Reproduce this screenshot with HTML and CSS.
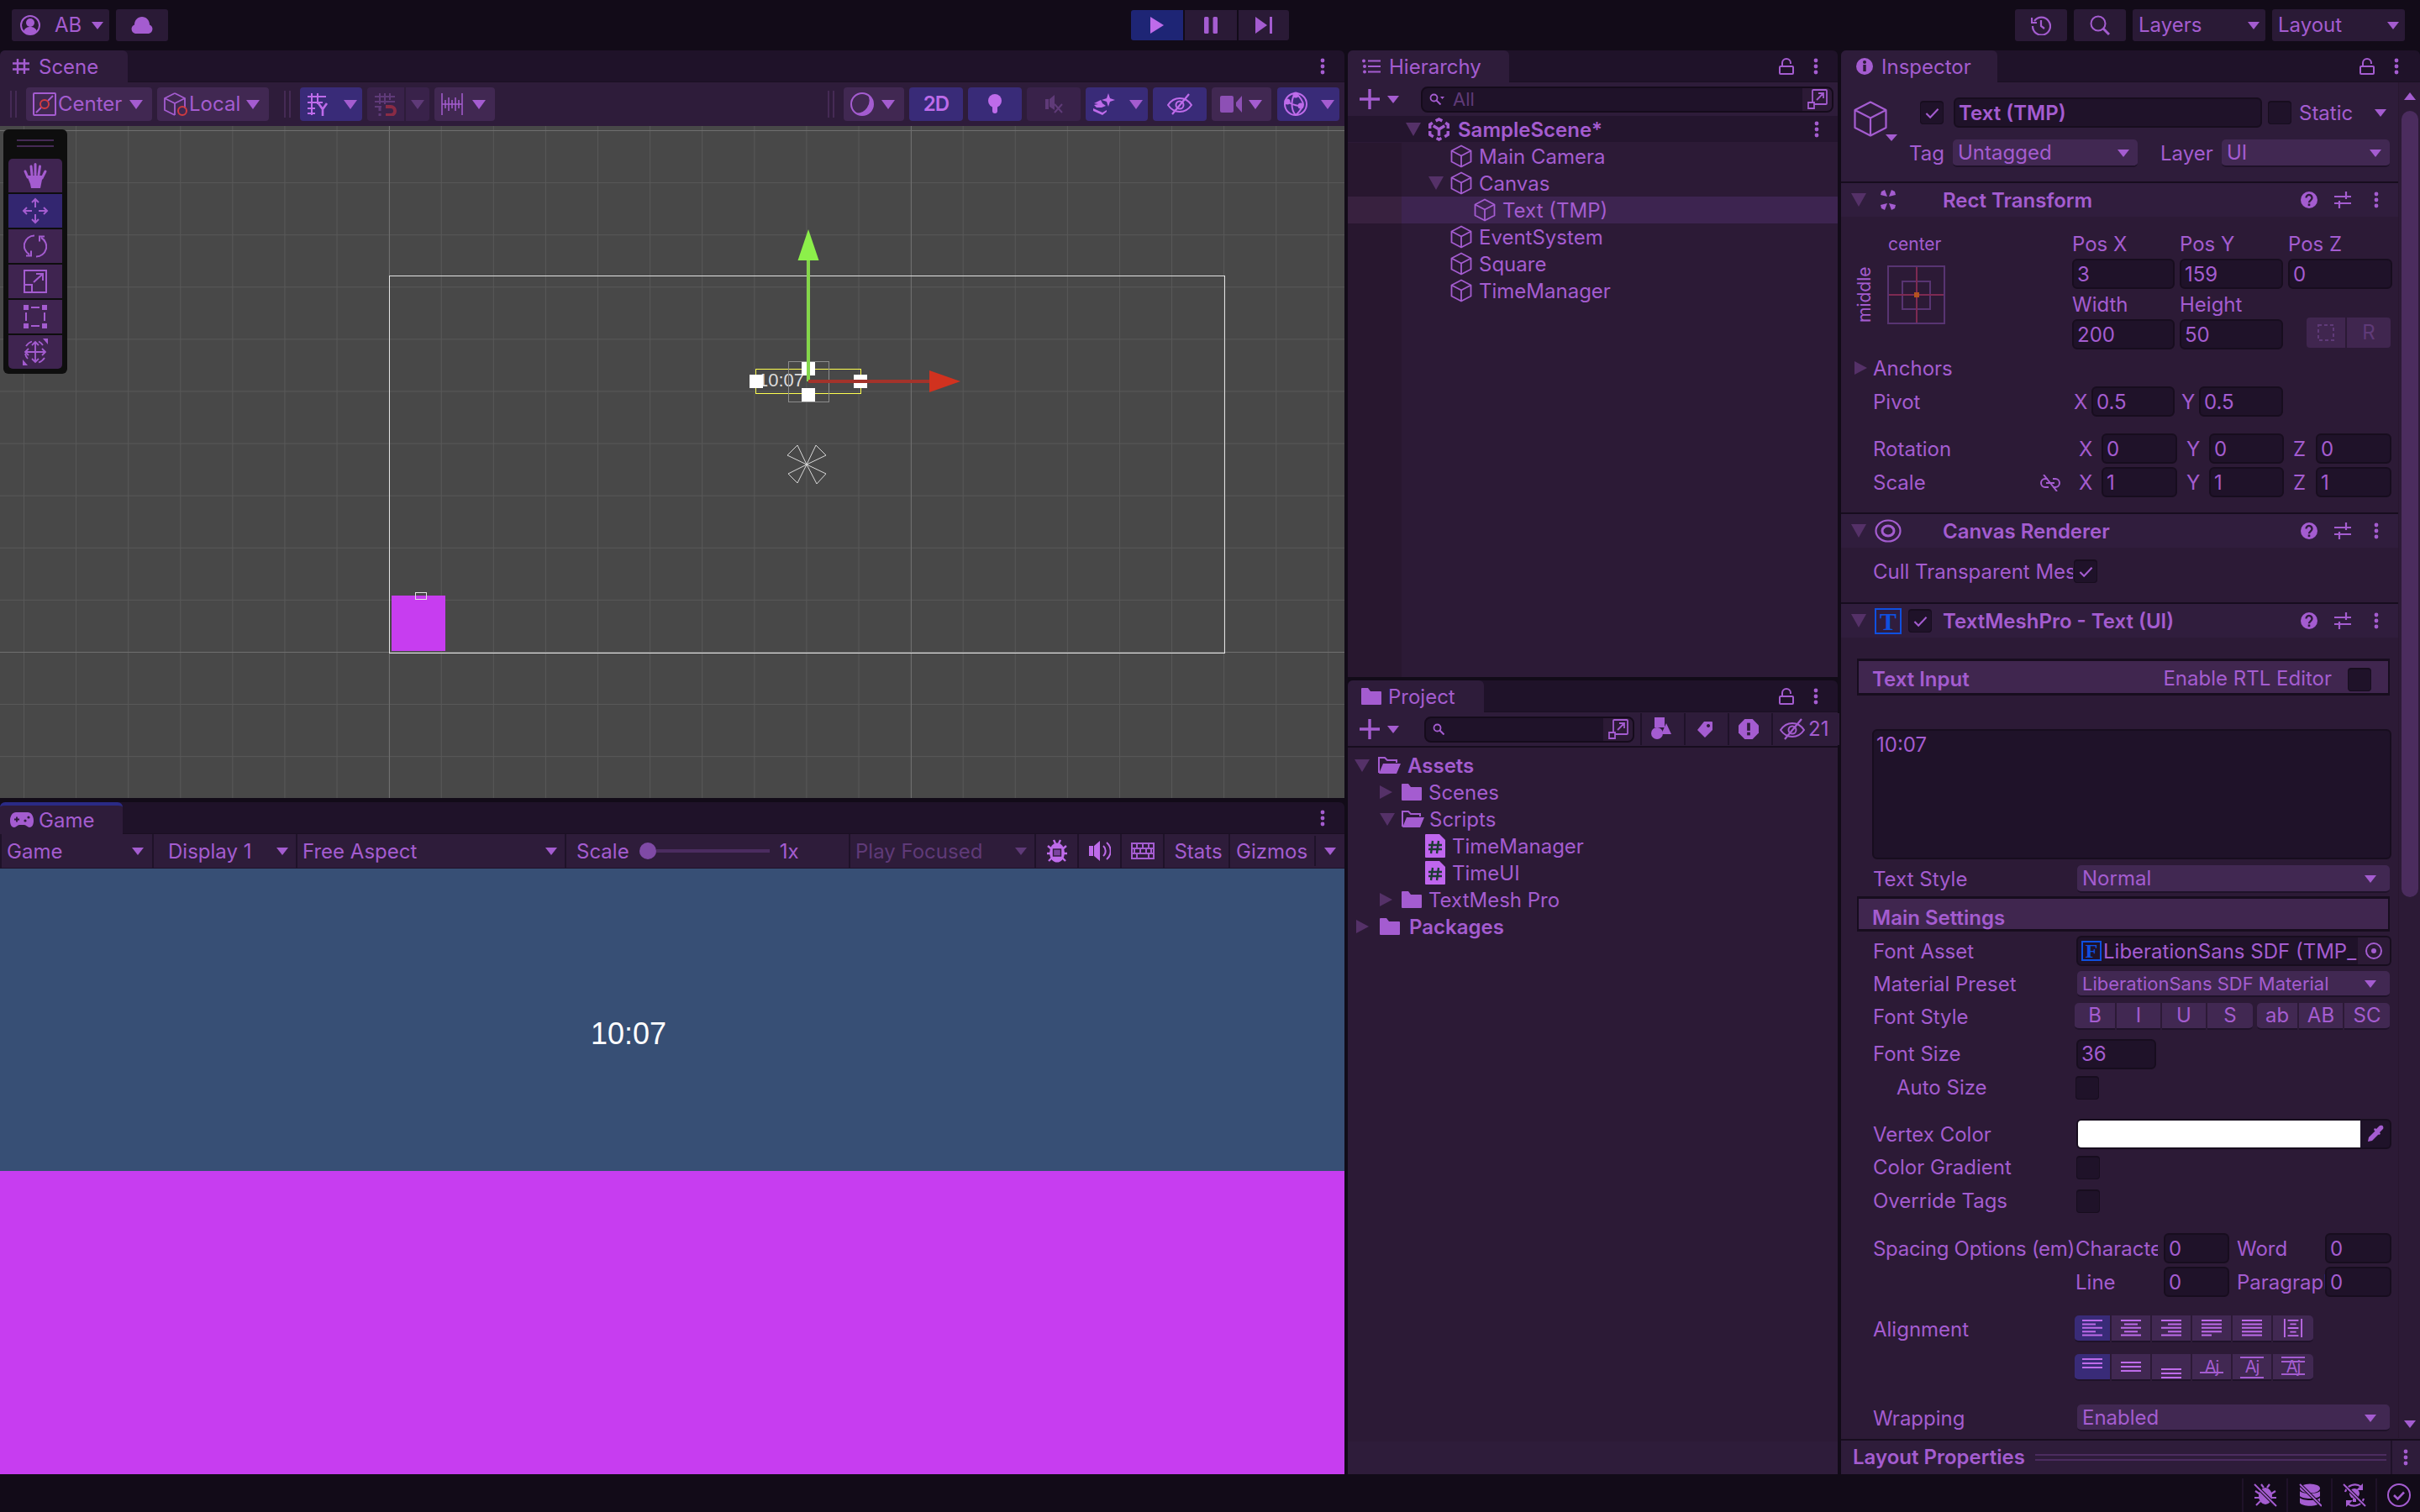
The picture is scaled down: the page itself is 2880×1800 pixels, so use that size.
FILE: index.html
```html
<!DOCTYPE html>
<html lang="en">
<head>
<meta charset="utf-8">
<title>Unity Editor</title>
<link rel="stylesheet" href="styles.css">
</head>
<body>
<svg class="defs" aria-hidden="true">
  <symbol id="user" viewBox="0 0 24 24"><circle cx="12" cy="12" r="11" fill="none" stroke="currentColor" stroke-width="2"/><circle cx="12" cy="9" r="5" fill="currentColor"/><path d="M4 20c1-5 5-6 8-6s7 1 8 6c-4 4-12 4-16 0z" fill="currentColor"/></symbol>
  <symbol id="cloud" viewBox="0 0 28 20"><path d="M6 20a5.500 5.500 0 0 1-1-10.500C5 4 9 0 14 0s9 4 9 9.500a5.500 5.500 0 0 1-1 10.500z" fill="currentColor"/></symbol>
  <symbol id="hash" viewBox="0 0 22 20"><path d="M7 1v18M15 1v18M1 6.500h20M1 13.500h20" fill="none" stroke="currentColor" stroke-width="2.400"/></symbol>
  <symbol id="dots" viewBox="0 0 6 20"><circle cx="3" cy="3" r="2.400" fill="currentColor"/><circle cx="3" cy="10" r="2.400" fill="currentColor"/><circle cx="3" cy="17" r="2.400" fill="currentColor"/></symbol>
  <symbol id="lock" viewBox="0 0 18 20"><rect x="1" y="10" width="16" height="9" rx="1" fill="none" stroke="currentColor" stroke-width="2"/><path d="M4 10V6a5 5 0 0 1 10 0v1" fill="none" stroke="currentColor" stroke-width="2"/></symbol>
  <symbol id="center" viewBox="0 0 28 28"><g fill="none" stroke="currentColor" stroke-width="2"><rect x="1" y="1" width="26" height="26" rx="1"/><path d="M4 24l6-6M18 10l6-6"/></g><circle cx="14" cy="14" r="5" fill="none" stroke="#d03a40" stroke-width="2"/></symbol>
  <symbol id="local" viewBox="0 0 28 28"><path d="M13 1L25 7v12M13 27L1 21V7L13 1M1 7l12 6 12-6M13 13v14" fill="none" stroke="currentColor" stroke-width="1.800"/><circle cx="22" cy="22" r="5" fill="none" stroke="#d03a40" stroke-width="2"/></symbol>
  <symbol id="snap" viewBox="0 0 28 28"><path d="M6 1v26M13 1v13M1 5h22M1 12h18M1 19h9M1 25h9" fill="none" stroke="currentColor" stroke-width="2"/><path d="M14 13l5 7 5-7M19 20v8" fill="none" stroke="currentColor" stroke-width="2.600"/></symbol>
  <symbol id="magnet" viewBox="0 0 28 28"><path d="M7 1v13M13 1v13M19 1v8M1 5h24M1 11h24M1 17h8" fill="none" stroke="currentColor" stroke-width="2"/><path d="M7 18v4M7 25v3" stroke="currentColor" stroke-width="3"/><path d="M14 17h6a5 5 0 0 1 0 10h-6" fill="none" stroke="#8a2b45" stroke-width="4"/></symbol>
  <symbol id="incr" viewBox="0 0 26 26"><path d="M1 0v26M25 0v26M5 8v10M9 5v16M13 8v10M17 5v16M21 8v10M1 13h24" fill="none" stroke="currentColor" stroke-width="1.500"/></symbol>
  <symbol id="hand" viewBox="0 0 30 30"><g stroke="currentColor" stroke-width="3" stroke-linecap="round"><path d="M6 17L3 10M11 14L10 4M15 14V1.500M19 14l1.500-10M23 18l4-8"/></g><path d="M5 15h19l-2 10-1 5H10l-1-5z" fill="currentColor"/></symbol>
  <symbol id="move" viewBox="0 0 32 32"><path d="M16 2v10M16 20v10M2 16h10M20 16h10M12 6l4-4 4 4M12 26l4 4 4-4M6 12l-4 4 4 4M26 12l4 4-4 4" fill="none" stroke="currentColor" stroke-width="2"/></symbol>
  <symbol id="rotate" viewBox="0 0 28 28"><path d="M13 1.500A12 12 0 0 0 7 24M3 25.500h6v-6M15 26.500A12 12 0 0 0 21 4M25 2.500h-6v6" fill="none" stroke="currentColor" stroke-width="2"/></symbol>
  <symbol id="scale" viewBox="0 0 28 28"><path d="M1 1h26v26H1zM1 18h9v9M12 15L23 5M15 5h8v8" fill="none" stroke="currentColor" stroke-width="2"/></symbol>
  <symbol id="rect" viewBox="0 0 28 28"><path d="M0 0h6v6H0zM22 0h6v6h-6zM0 22h6v6H0zM22 22h6v6h-6z" fill="currentColor"/><path d="M9 3h10M9 25h10M3 9v10M25 9v10" fill="none" stroke="currentColor" stroke-width="2"/></symbol>
  <symbol id="xform" viewBox="0 0 32 32"><path d="M16 4v24M4 16h24M12 8l4-4 4 4M12 24l4 4 4-4M8 12l-4 4 4 4M24 12l4 4-4 4" fill="none" stroke="currentColor" stroke-width="1.800"/><path d="M5 9A13 13 0 0 1 12 3.500M27 23a13 13 0 0 1-7 5.500M20 3.500A13 13 0 0 1 25 8M7 24a13 13 0 0 1-3-6" fill="none" stroke="currentColor" stroke-width="1.800"/><path d="M31 0v7l-6-7zM1 32v-7l6 7z" fill="currentColor"/></symbol>
  <symbol id="orb" viewBox="0 0 28 28"><circle cx="14" cy="14" r="13" fill="none" stroke="currentColor" stroke-width="2"/><path d="M21 3A13 13 0 0 1 6 24.500 15 15 0 0 0 21 3z" fill="currentColor"/></symbol>
  <symbol id="bulb" viewBox="0 0 18 24"><circle cx="9" cy="8" r="8" fill="currentColor"/><path d="M6 15h6v5a3 3 0 0 1-6 0z" fill="currentColor"/></symbol>
  <symbol id="mute" viewBox="0 0 24 22"><path d="M2 5h4v12H2zM7 5l6-5v18l-6-4z" fill="currentColor"/><path d="M13 11l9 10M22 11l-9 10" stroke="currentColor" stroke-width="2"/></symbol>
  <symbol id="fx" viewBox="0 0 26 26"><path d="M18 0l2 6 6 2-6 2-2 6-2-6-6-2 6-2z" fill="currentColor"/><path d="M1 12l8-4 2 4 4 3-5 2-6 0-3-3 5-1zM0 18l11 5 5-3v2l-5 4-11-5z" fill="currentColor"/></symbol>
  <symbol id="eyeoff" viewBox="0 0 30 26"><path d="M1 14c4-6 9-8 14-8s10 2 14 8c-4 6-9 8-14 8s-10-2-14-8z" fill="none" stroke="currentColor" stroke-width="2"/><circle cx="15" cy="14" r="4.500" fill="none" stroke="currentColor" stroke-width="2"/><path d="M26 1L6 25" stroke="currentColor" stroke-width="2.200"/></symbol>
  <symbol id="cam" viewBox="0 0 26 20"><path d="M0 2a2 2 0 0 1 2-2h12a2 2 0 0 1 2 2v16a2 2 0 0 1-2 2H2a2 2 0 0 1-2-2zM19 8l7-8v20l-7-8z" fill="currentColor"/></symbol>
  <symbol id="gizmo" viewBox="0 0 30 30"><g fill="none" stroke="currentColor" stroke-width="2"><circle cx="15" cy="15" r="13"/><path d="M15 2C9 8 9 22 15 28M15 2c5 4 9 10 9 14M5 12c6 4 14 6 19 4M24 16c-2 4-5 9-9 12"/></g><circle cx="15" cy="4" r="3.500" fill="currentColor"/><circle cx="5" cy="12" r="3.500" fill="currentColor"/><circle cx="21" cy="17" r="3.500" fill="currentColor"/></symbol>
  <symbol id="list" viewBox="0 0 22 18"><path d="M7 2.500h15M7 9h15M7 15.500h15" stroke="currentColor" stroke-width="2"/><circle cx="2" cy="2.500" r="2" fill="currentColor"/><circle cx="3" cy="9" r="2" fill="currentColor"/><circle cx="3" cy="15.500" r="2" fill="currentColor"/></symbol>
  <symbol id="plus" viewBox="0 0 24 24"><path d="M12 0v24M0 12h24" stroke="currentColor" stroke-width="3.400"/></symbol>
  <symbol id="keys" viewBox="0 0 18 14"><circle cx="5.500" cy="5.500" r="4" fill="none" stroke="currentColor" stroke-width="1.800"/><path d="M8.500 8.500l5 5" stroke="currentColor" stroke-width="2"/><path d="M13 4h5l-2.500 3z" fill="currentColor"/></symbol>
  <symbol id="mag" viewBox="0 0 14 14"><circle cx="5.500" cy="5.500" r="4" fill="none" stroke="currentColor" stroke-width="1.800"/><path d="M8.500 8.500l5 5" stroke="currentColor" stroke-width="2"/></symbol>
  <symbol id="maxi" viewBox="0 0 24 24"><path d="M6 16V2a1 1 0 0 1 1-1h15a1 1 0 0 1 1 1v15a1 1 0 0 1-1 1H8M1 16h7v7H1zM11 13l8-8M13 5h6v6" fill="none" stroke="currentColor" stroke-width="1.800"/></symbol>
  <symbol id="unity" viewBox="0 0 26 28"><g fill="none" stroke="currentColor" stroke-width="3.600"><path d="M9 3.500L13 1.500 17 3.500M21 6L24.200 8V13M24.200 16V20.500L20 23M16 25L13 26.500 10 25M6 23L1.800 20.500V16M1.800 13V8L5 6"/><path d="M6 9.500L13 14 20 9.500M13 14V22"/></g></symbol>
  <symbol id="cube" viewBox="0 0 26 28"><path d="M13 1.500L24.500 7.500V20.500L13 26.500L1.500 20.500V7.500ZM1.500 7.500L13 13.500L24.500 7.500M13 13.500V26.500" fill="none" stroke="currentColor" stroke-width="1.800" stroke-linejoin="round"/></symbol>
  <symbol id="cubebig" viewBox="0 0 52 48"><path d="M20 1.500L38.500 11V32L20 41.500L1.500 32V11ZM1.500 11L20 20.500L38.500 11M20 20.500V41.500" fill="none" stroke="currentColor" stroke-width="2.200" stroke-linejoin="round"/><path d="M38 40h14l-7 8z" fill="currentColor"/></symbol>
  <symbol id="info" viewBox="0 0 20 20"><circle cx="10" cy="10" r="10" fill="currentColor"/><rect x="8.300" y="8" width="3.400" height="8" fill="#2e1c3a"/><circle cx="10" cy="5" r="2" fill="#2e1c3a"/></symbol>
  <symbol id="check" viewBox="0 0 18 14"><path d="M1.500 7l5 5L16.500 1.500" fill="none" stroke="currentColor" stroke-width="2.200"/></symbol>
  <symbol id="rt" viewBox="0 0 26 24"><path d="M9 0l3 8-8-2 1-4zM17 0l-3 8 8-2-1-4zM9 24l3-8-8 2 1 4zM17 24l-3-8 8 2-1 4z" fill="currentColor"/></symbol>
  <symbol id="help" viewBox="0 0 20 20"><circle cx="10" cy="10" r="10" fill="currentColor"/><path d="M6.500 7.500a3.500 3.500 0 1 1 5.500 2.800c-1.300 1-2 1.500-2 3" fill="none" stroke="#2e1c3a" stroke-width="2.400"/><rect x="8.700" y="14.500" width="2.600" height="2.600" fill="#2e1c3a"/></symbol>
  <symbol id="tune" viewBox="0 0 20 20"><path d="M0 6h20M0 14h20M14 0v9M6 11v9" stroke="currentColor" stroke-width="2.200" fill="none"/></symbol>
  <symbol id="ring" viewBox="0 0 32 28"><ellipse cx="16" cy="14" rx="14.500" ry="12.500" fill="none" stroke="currentColor" stroke-width="2.200"/><ellipse cx="16" cy="14" rx="7" ry="6" fill="none" stroke="currentColor" stroke-width="3"/></symbol>
  <symbol id="dash" viewBox="0 0 20 20"><rect x="1" y="1" width="18" height="18" fill="none" stroke="currentColor" stroke-width="2" stroke-dasharray="4 3"/></symbol>
  <symbol id="link" viewBox="0 0 24 20"><path d="M9 5H6a5 5 0 0 0 0 10h4M15 5h3a5 5 0 0 1 0 10h-3M7 10h10" fill="none" stroke="currentColor" stroke-width="2"/><path d="M4 0l16 20" stroke="currentColor" stroke-width="2"/></symbol>
  <symbol id="target" viewBox="0 0 20 20"><circle cx="10" cy="10" r="9" fill="none" stroke="currentColor" stroke-width="2"/><circle cx="10" cy="10" r="3" fill="currentColor"/></symbol>
  <symbol id="dropper" viewBox="0 0 22 22"><path d="M2 20l1-5 8-8 4 4-8 8z" fill="currentColor"/><path d="M12 5l3-3c1-1 4-2 5 0s0 3-1 4l-3 3 1 2-2 1-6-6 1-2z" fill="currentColor"/></symbol>
  <symbol id="folder" viewBox="0 0 24 20"><path d="M0 1a1 1 0 0 1 1-1h7l3 4h12a1 1 0 0 1 1 1v14a1 1 0 0 1-1 1H1a1 1 0 0 1-1-1z" fill="currentColor"/></symbol>
  <symbol id="folderopen" viewBox="0 0 27 20"><path d="M1 19V1h7l3 3h11v3" fill="none" stroke="currentColor" stroke-width="2"/><path d="M1 20l5-12h21l-5 12z" fill="currentColor"/></symbol>
  <symbol id="script" viewBox="0 0 24 28"><path d="M0 1a1 1 0 0 1 1-1h16l7 7v20a1 1 0 0 1-1 1H1a1 1 0 0 1-1-1z" fill="#c066ee"/><path d="M9 8L7 23M16 8l-2 15M4 13h16M4 18h16" stroke="#1d3a34" stroke-width="2.400" fill="none"/></symbol>
  <symbol id="shapes" viewBox="0 0 24 28"><path d="M4 0h12v12H4z" fill="currentColor"/><circle cx="7" cy="19" r="7" fill="currentColor"/><path d="M18 7l6 13H12z" fill="currentColor"/></symbol>
  <symbol id="tag" viewBox="0 0 20 20"><path d="M9 1h9a1 1 0 0 1 1 1v9l-9 9-9-9zM14 4a2 2 0 1 0 .1 0z" fill="currentColor" fill-rule="evenodd"/></symbol>
  <symbol id="warn" viewBox="0 0 26 26"><path d="M8 0h10l8 8v10l-8 8H8l-8-8V8z" fill="currentColor"/><rect x="11" y="5" width="4" height="10" fill="#2e1c3a"/><rect x="11" y="17" width="4" height="4" fill="#2e1c3a"/></symbol>
  <symbol id="pad" viewBox="0 0 28 20"><path d="M7 1h14c4 0 7 4 7 10 0 5-2 8-5 8-2 0-4-3-6-3h-6c-2 0-4 3-6 3-3 0-5-3-5-8C0 5 3 1 7 1z" fill="currentColor"/><path d="M5 9.500h6M8 6.500v6" stroke="#2e1c3a" stroke-width="1.800"/><circle cx="18" cy="11" r="1.600" fill="#2e1c3a"/><circle cx="22" cy="7" r="1.600" fill="#2e1c3a"/></symbol>
  <symbol id="bug" viewBox="0 0 28 28"><ellipse cx="14" cy="16" rx="9" ry="11.500" fill="currentColor"/><path d="M10 1l2 4M18 1l-2 4M3 8l6 5M25 8l-6 5M2 17h6M26 17h-6M4 26l5-5M24 26l-5-5" stroke="currentColor" stroke-width="2.400" fill="none"/><rect x="9.500" y="12" width="9" height="8" fill="#7b43a0" stroke="#2e1c3a" stroke-width="1.400"/></symbol>
  <symbol id="speak" viewBox="0 0 26 24"><path d="M0 6h5v12H0zM6 6l7-6v24l-7-6z" fill="currentColor"/><path d="M17 6a8 8 0 0 1 0 12M21 2a13 13 0 0 1 0 20" fill="none" stroke="currentColor" stroke-width="2"/></symbol>
  <symbol id="kbd" viewBox="0 0 28 20"><path d="M1 1h26v18H1zM1 7h26M1 13h26M7 1v6M14 1v6M21 1v6M4 7v6M11 7v6M18 7v6M24 7v6M7 13v6M21 13v6" fill="none" stroke="currentColor" stroke-width="2"/></symbol>
  <symbol id="history" viewBox="0 0 24 24"><path d="M4 7a10.500 10.500 0 1 1-2 6M1 3v6h6M12 6v7l4 3" fill="none" stroke="currentColor" stroke-width="2.200"/></symbol>
  <symbol id="search" viewBox="0 0 24 24"><circle cx="10" cy="10" r="8.500" fill="none" stroke="currentColor" stroke-width="2"/><path d="M16 16l7 7" stroke="currentColor" stroke-width="3"/></symbol>
  <symbol id="play" viewBox="0 0 16 20"><path d="M0 0l16 10L0 20z" fill="currentColor"/></symbol>
  <symbol id="pause" viewBox="0 0 16 20"><rect width="5.500" height="20" rx="1.500" fill="currentColor"/><rect x="10.500" width="5.500" height="20" rx="1.500" fill="currentColor"/></symbol>
  <symbol id="step" viewBox="0 0 20 20"><path d="M0 0l14 10L0 20z" fill="currentColor"/><rect x="17" width="3" height="20" fill="currentColor"/></symbol>
  <symbol id="bugoff" viewBox="0 0 28 28"><ellipse cx="14" cy="15" rx="8" ry="10" fill="currentColor"/><path d="M9 1l3 4M19 1l-3 4M2 9l6 4M26 9l-6 4M1 17h7M27 17h-7M3 26l5-5M25 26l-5-5" stroke="currentColor" stroke-width="2.200" fill="none"/><path d="M1 1l26 26" stroke="#120b18" stroke-width="4"/><path d="M1 1l26 26" stroke="currentColor" stroke-width="2"/></symbol>
  <symbol id="dboff" viewBox="0 0 26 28"><ellipse cx="13" cy="6" rx="12" ry="5.500" fill="currentColor"/><path d="M1 9c3 4 21 4 24 0v6c-3 4-21 4-24 0zM1 17c3 4 21 4 24 0v6c-3 5-21 5-24 0z" fill="currentColor"/><path d="M1 1l26 26" stroke="#120b18" stroke-width="4"/><path d="M1 1l26 26" stroke="currentColor" stroke-width="2"/></symbol>
  <symbol id="lightoff" viewBox="0 0 28 28"><path d="M3 10A12 12 0 0 1 22 4M25 18A12 12 0 0 1 6 24" fill="none" stroke="currentColor" stroke-width="2.200"/><path d="M24 0v8h-8zM4 28v-8h8z" fill="currentColor"/><circle cx="14" cy="12" r="6" fill="currentColor"/><path d="M12 18h4v4h-4z" fill="currentColor"/><path d="M1 1l26 26" stroke="#120b18" stroke-width="4"/><path d="M1 1l26 26" stroke="currentColor" stroke-width="2"/></symbol>
  <symbol id="okring" viewBox="0 0 28 28"><circle cx="14" cy="14" r="13" fill="none" stroke="currentColor" stroke-width="2"/><path d="M8 14l4.500 4.500L20 10.500" fill="none" stroke="currentColor" stroke-width="2.600"/></symbol>
  <symbol id="al-l" viewBox="0 0 24 22"><path d="M0 1h24M0 5.400h16M0 9.800h24M0 14.200h16M0 18.600h24" transform="translate(0 1)" stroke="currentColor" stroke-width="2"/></symbol>
  <symbol id="al-c" viewBox="0 0 24 22"><path d="M0 2h24M4 6.400h16M0 10.800h24M4 15.200h16M0 19.600h24" stroke="currentColor" stroke-width="2"/></symbol>
  <symbol id="al-r" viewBox="0 0 24 22"><path d="M0 2h24M8 6.400h16M0 10.800h24M8 15.200h16M0 19.600h24" stroke="currentColor" stroke-width="2"/></symbol>
  <symbol id="al-j" viewBox="0 0 24 22"><path d="M0 2h24M0 6.400h24M0 10.800h24M0 15.200h24M0 19.600h12" stroke="currentColor" stroke-width="2"/></symbol>
  <symbol id="al-f" viewBox="0 0 24 22"><path d="M0 2h24M0 6.400h24M0 10.800h24M0 15.200h24M0 19.600h24" stroke="currentColor" stroke-width="2"/></symbol>
  <symbol id="al-g" viewBox="0 0 24 24"><path d="M1 0v24M23 0v24M5 2h14M8 7h8M5 12h14M8 17h8M5 22h14" stroke="currentColor" stroke-width="2"/></symbol>
  <symbol id="va-t" viewBox="0 0 24 30"><path d="M0 7h24M0 12h24M0 17h24" transform="translate(0 -1)" stroke="currentColor" stroke-width="2"/></symbol>
  <symbol id="va-m" viewBox="0 0 24 30"><path d="M0 10h24M0 15h24M0 20h24" stroke="currentColor" stroke-width="2"/></symbol>
  <symbol id="va-b" viewBox="0 0 24 30"><path d="M0 18h24M0 23h24M0 28h24" stroke="currentColor" stroke-width="2"/></symbol>
</svg>

<div class="app">
  <header class="top">
    <div class="top-l">
      <div class="tbtn ab"><svg class="i s24"><use href="#user"/></svg><span class="ab-t">AB</span><i class="tri t14"></i></div>
      <div class="tbtn cloud"><svg class="i cl"><use href="#cloud"/></svg></div>
    </div>
    <div class="top-c">
      <div class="pbtn on"><svg class="i p"><use href="#play"/></svg></div>
      <div class="pbtn"><svg class="i p"><use href="#pause"/></svg></div>
      <div class="pbtn stepb"><svg class="i st"><use href="#step"/></svg></div>
    </div>
    <div class="top-r">
      <div class="tbtn hist"><svg class="i s24"><use href="#history"/></svg></div>
      <div class="tbtn hist"><svg class="i s24"><use href="#search"/></svg></div>
      <div class="tbtn drop"><span>Layers</span><i class="tri t14"></i></div>
      <div class="tbtn drop"><span>Layout</span><i class="tri t14"></i></div>
    </div>
  </header>

  <main class="main">
    <div class="col-left">
      <section class="scene">
        <div class="strip"><div class="tab w152"><svg class="i hashi"><use href="#hash"/></svg><span class="tabt-47">Scene</span></div><svg class="i dots dots-r"><use href="#dots"/></svg></div>
        <div class="scene-tb">
          <i class="grip"></i>
          <div class="b center"><svg class="i s28"><use href="#center"/></svg><span class="tight">Center</span><i class="tri t17 end"></i></div>
          <div class="b local"><svg class="i s28"><use href="#local"/></svg><span class="tight">Local</span><i class="tri t17 end"></i></div>
          <i class="grip g2"></i>
          <div class="b split on"><span class="sp1"><svg class="i s28 bright"><use href="#snap"/></svg></span><span class="sp2"><i class="tri t17"></i></span></div>
          <div class="b split dim"><span class="sp1"><svg class="i s28"><use href="#magnet"/></svg></span><span class="sp2"><i class="tri t17"></i></span></div>
          <div class="b inc"><svg class="i s26"><use href="#incr"/></svg><i class="tri t17 end"></i></div>
          <span class="spacer"></span>
          <i class="grip g3"></i>
          <div class="b orb"><svg class="i s28"><use href="#orb"/></svg><i class="tri t17 end"></i></div>
          <div class="b sq on bright"><span class="twod">2D</span></div>
          <div class="b sq on bright"><svg class="i bulb"><use href="#bulb"/></svg></div>
          <div class="b sq dim"><svg class="i mute"><use href="#mute"/></svg></div>
          <div class="b split on"><span class="sp1"><svg class="i fx bright"><use href="#fx"/></svg></span><span class="sp2"><i class="tri t17"></i></span></div>
          <div class="b sq on"><svg class="i eye bright"><use href="#eyeoff"/></svg></div>
          <div class="b camb"><svg class="i cam"><use href="#cam"/></svg><i class="tri t17 end"></i></div>
          <div class="b split on gizmob"><span class="sp1"><svg class="i s30 bright"><use href="#gizmo"/></svg></span><span class="sp2"><i class="tri t17"></i></span></div>
        </div>
        <div class="scene-view">
          <svg class="gizmos" width="1600" height="800" viewBox="0 150 1600 800">
            <rect x="463.500" y="328.500" width="994" height="449" fill="none" stroke="#e2e2e2" stroke-width="1"/>
            <rect x="466" y="709" width="64" height="66" fill="#c73df0"/>
            <rect x="494.500" y="705.500" width="13" height="8" fill="none" stroke="#e2e2e2" stroke-width="1"/>
            <text x="902" y="460" class="gz-text">10:07</text>
            <rect x="899.500" y="439.500" width="125" height="29" fill="none" stroke="#ffff50" stroke-width="1"/>
            <rect x="938.500" y="430.500" width="48" height="48" fill="none" stroke="#8c8c8c" stroke-width="1"/>
            <path d="M954 431h16v16h-16zM892 446h16v16h-16zM1016 446h16v16h-16zM954 462h16v16h-16z" fill="#fff"/>
            <rect x="960" y="310" width="4" height="144" fill="#84d64a"/>
            <path d="M962 273l12.500 37h-25z" fill="#8cf04a"/>
            <rect x="962" y="452" width="145" height="4" fill="#a3332b"/>
            <path d="M1106 441l37 13-37 13z" fill="#d1321f"/>
            <g fill="none" stroke="#d8d8d8" stroke-width="1">
              <path d="M960 553L937 542 949 530zM960 553L971 530 983 542zM960 553L938 564 949 575zM960 553L983 564 972 576z"/>
            </g>
          </svg>
          <div class="toolbox">
            <i class="tb-grip"></i>
            <div class="tool"><svg class="i s30"><use href="#hand"/></svg></div>
            <div class="tool on"><svg class="i s32"><use href="#move"/></svg></div>
            <div class="tool"><svg class="i s28"><use href="#rotate"/></svg></div>
            <div class="tool"><svg class="i s28"><use href="#scale"/></svg></div>
            <div class="tool"><svg class="i s28"><use href="#rect"/></svg></div>
            <div class="tool"><svg class="i s32"><use href="#xform"/></svg></div>
          </div>
        </div>
      </section>
      <section class="game">
        <div class="strip gstrip"><div class="tab w146 gtab"><svg class="i padi"><use href="#pad"/></svg><span class="tabt-47b">Game</span></div><svg class="i dots dots-r"><use href="#dots"/></svg></div>
        <div class="game-tb">
          <div class="gs g1"><span>Game</span><i class="tri t14 end"></i></div>
          <div class="gs g2w"><span>Display 1</span><i class="tri t14 end"></i></div>
          <div class="gs g3w"><span>Free Aspect</span><i class="tri t14 end"></i></div>
          <div class="gs g4w"><span>Scale</span><i class="thumb"></i><i class="track"></i><span class="onex">1x</span></div>
          <div class="gs g5w dimt"><span>Play Focused</span><i class="tri t14 end"></i></div>
          <div class="gs ic"><svg class="i s28 bright"><use href="#bug"/></svg></div>
          <div class="gs ic"><svg class="i s26b bright"><use href="#speak"/></svg></div>
          <div class="gs ic"><svg class="i kbd"><use href="#kbd"/></svg></div>
          <div class="gs g6w"><span>Stats</span></div>
          <div class="gs g7w"><span>Gizmos</span><i class="vd"></i><i class="tri t14"></i></div>
        </div>
        <div class="game-blue"><span class="g-clock">10:07</span></div>
        <div class="game-pink"></div>
      </section>
    </div>

    <div class="col-mid">
      <section class="hier">
        <div class="strip"><div class="tab w192"><svg class="i listi"><use href="#list"/></svg><span class="tabt-h">Hierarchy</span></div><span class="strip-r"><svg class="i lock"><use href="#lock"/></svg><svg class="i dots"><use href="#dots"/></svg></span></div>
        <div class="pn-tb">
          <svg class="i plus"><use href="#plus"/></svg><i class="tri t14 tp"></i>
          <div class="sf sf-h"><svg class="i keys"><use href="#keys"/></svg><span class="ph">All</span><span class="sf-b"><svg class="i s24b"><use href="#maxi"/></svg></span></div>
        </div>
        <div class="tree">
          <div class="root"><i class="tri dn t-h"></i><svg class="i unity"><use href="#unity"/></svg><b class="rt">SampleScene*</b><svg class="i dots dots-root"><use href="#dots"/></svg></div>
          <div class="tr l1"><svg class="i cube"><use href="#cube"/></svg><span>Main Camera</span></div>
          <div class="tr l0"><i class="tri dn t-h"></i><svg class="i cube"><use href="#cube"/></svg><span>Canvas</span></div>
          <div class="tr l2 sel"><svg class="i cube"><use href="#cube"/></svg><span>Text (TMP)</span></div>
          <div class="tr l1"><svg class="i cube"><use href="#cube"/></svg><span>EventSystem</span></div>
          <div class="tr l1"><svg class="i cube"><use href="#cube"/></svg><span>Square</span></div>
          <div class="tr l1"><svg class="i cube"><use href="#cube"/></svg><span>TimeManager</span></div>
        </div>
      </section>
      <section class="proj">
        <div class="strip"><div class="tab w162"><svg class="i folder fd-tab"><use href="#folder"/></svg><span class="tabt-p">Project</span></div><span class="strip-r"><svg class="i lock"><use href="#lock"/></svg><svg class="i dots"><use href="#dots"/></svg></span></div>
        <div class="pn-tb ptb">
          <svg class="i plus"><use href="#plus"/></svg><i class="tri t14 tp"></i>
          <div class="sf sf-p"><svg class="i mag"><use href="#mag"/></svg><span class="sf-b"><svg class="i s24b"><use href="#maxi"/></svg></span></div>
          <div class="pf w50"><svg class="i shapes"><use href="#shapes"/></svg></div>
          <div class="pf w50"><svg class="i s20"><use href="#tag"/></svg></div>
          <div class="pf w50"><svg class="i s26b"><use href="#warn"/></svg></div>
          <div class="pf w79"><svg class="i eye"><use href="#eyeoff"/></svg><span>21</span></div>
        </div>
        <div class="ptree">
          <div class="pr a0"><i class="tri dn t-p"></i><svg class="i fo"><use href="#folderopen"/></svg><b>Assets</b></div>
          <div class="pr a1"><i class="tri rt-t"></i><svg class="i folder"><use href="#folder"/></svg><span>Scenes</span></div>
          <div class="pr a1"><i class="tri dn t-p"></i><svg class="i fo"><use href="#folderopen"/></svg><span>Scripts</span></div>
          <div class="pr a2"><svg class="i script"><use href="#script"/></svg><span>TimeManager</span></div>
          <div class="pr a2"><svg class="i script"><use href="#script"/></svg><span>TimeUI</span></div>
          <div class="pr a1"><i class="tri rt-t"></i><svg class="i folder"><use href="#folder"/></svg><span>TextMesh Pro</span></div>
          <div class="pr a0"><i class="tri rt-t"></i><svg class="i folder"><use href="#folder"/></svg><b>Packages</b></div>
        </div>
        <div class="pfoot"></div>
      </section>
    </div>

    <section class="insp">
      <div class="strip"><div class="tab w186"><svg class="i s20"><use href="#info"/></svg><span class="tabt-i">Inspector</span></div><span class="strip-r strip-ri"><svg class="i lock"><use href="#lock"/></svg><svg class="i dots"><use href="#dots"/></svg></span></div>
      <div class="ins-body">
        <div class="ins-content">
          <div class="ohead">
            <div class="oh1">
              <svg class="i cubebig"><use href="#cubebig"/></svg>
              <span class="cb on m27"><svg class="i ck"><use href="#check"/></svg></span>
              <div class="f name"><b>Text (TMP)</b></div>
              <span class="cb m7"></span>
              <span class="static">Static</span><i class="tri t14"></i>
            </div>
            <div class="oh2">
              <span class="w52">Tag</span><div class="dd w220"><span>Untagged</span><i class="tri t14"></i></div>
              <span class="w73">Layer</span><div class="dd w200"><span>UI</span><i class="tri t14"></i></div>
            </div>
          </div>

          <div class="ch"><i class="tri dn t-h"></i><span class="ch-ic"><svg class="i rt-i"><use href="#rt"/></svg></span><span class="ch-cb"></span><b>Rect Transform</b><span class="ch-r"><svg class="i s20"><use href="#help"/></svg><svg class="i s20"><use href="#tune"/></svg><svg class="i dots"><use href="#dots"/></svg></span></div>
          <div class="rt-top">
            <div class="anchor">
              <span class="a-c">center</span>
              <span class="a-m">middle</span>
              <div class="a-box"><i class="a-inner"></i><i class="a-h"></i><i class="a-v"></i><i class="a-o"></i></div>
            </div>
            <div class="rt-grid">
              <span>Pos X</span><span>Pos Y</span><span>Pos Z</span>
              <div class="f">3</div><div class="f">159</div><div class="f">0</div>
              <span>Width</span><span>Height</span><span></span>
              <div class="f">200</div><div class="f">50</div>
              <div class="rt-btns"><span class="rb rb1"><svg class="i s20"><use href="#dash"/></svg></span><span class="rb rb2">R</span></div>
            </div>
          </div>
          <div class="r anchors"><i class="tri rt-t"></i><span>Anchors</span></div>
          <div class="r pivot"><span class="l238">Pivot</span><span class="ax">X</span><div class="f w99">0.5</div><span class="ax ay">Y</span><div class="f w100">0.5</div></div>
          <div class="r rot"><span class="l244">Rotation</span><span class="ax2">X</span><div class="f w90">0</div><span class="ax2 g11">Y</span><div class="f w89">0</div><span class="ax2 g11">Z</span><div class="f w90">0</div></div>
          <div class="r scale"><span class="l244 lnk"><span>Scale</span><svg class="i link"><use href="#link"/></svg></span><span class="ax2">X</span><div class="f w90">1</div><span class="ax2 g11">Y</span><div class="f w89">1</div><span class="ax2 g11">Z</span><div class="f w90">1</div></div>

          <div class="ch ch-mt18"><i class="tri dn t-h"></i><span class="ch-ic"><svg class="i ring"><use href="#ring"/></svg></span><span class="ch-cb"></span><b>Canvas Renderer</b><span class="ch-r"><svg class="i s20"><use href="#help"/></svg><svg class="i s20"><use href="#tune"/></svg><svg class="i dots"><use href="#dots"/></svg></span></div>
          <div class="r cull"><span class="l241 clip">Cull Transparent Mes</span><span class="cb on"><svg class="i ck"><use href="#check"/></svg></span></div>

          <div class="ch ch-mt23"><i class="tri dn t-h"></i><span class="ch-ic"><span class="tbox">T</span></span><span class="ch-cb"><span class="cb on"><svg class="i ck"><use href="#check"/></svg></span></span><b>TextMeshPro - Text (UI)</b><span class="ch-r"><svg class="i s20"><use href="#help"/></svg><svg class="i s20"><use href="#tune"/></svg><svg class="i dots"><use href="#dots"/></svg></span></div>
          <div class="sec sec-ti"><b>Text Input</b><span class="rtl">Enable RTL Editor</span><span class="cb"></span></div>
          <div class="ta">10:07</div>
          <div class="r h33 mt7"><span class="l242">Text Style</span><div class="dd w372"><span>Normal</span><i class="tri t14"></i></div></div>
          <div class="sec sec-ms"><b>Main Settings</b></div>
          <div class="r h36 mt5"><span class="l241">Font Asset</span><div class="f fa"><span class="fbox">F</span><span class="fa-t">LiberationSans SDF (TMP_Font Asset)</span><span class="fa-b"><svg class="i s20"><use href="#target"/></svg></span></div></div>
          <div class="r h31 mt6"><span class="l242">Material Preset</span><div class="dd w372 sm"><span>LiberationSans SDF Material</span><i class="tri t14"></i></div></div>
          <div class="r h32 mt7"><span class="l239">Font Style</span>
            <div class="segs">
              <span class="sb w48">B</span><span class="sb w52">I</span><span class="sb w52">U</span><span class="sb w54">S</span>
            </div>
            <div class="segs m5">
              <span class="sb w48">ab</span><span class="sb w52">AB</span><span class="sb w54">SC</span>
            </div>
          </div>
          <div class="r h35 mt11"><span class="l241">Font Size</span><div class="f w95">36</div></div>
          <div class="r h27 mt9 ind"><span class="l212">Auto Size</span><span class="cb"></span></div>
          <div class="r h36 mt24"><span class="l241">Vertex Color</span><div class="color"><i class="white"></i><span class="drop-b"><svg class="i s22"><use href="#dropper"/></svg></span></div></div>
          <div class="r h27 mt8"><span class="l241">Color Gradient</span><span class="cb"></span></div>
          <div class="r h27 mt13"><span class="l241">Override Tags</span><span class="cb"></span></div>
          <div class="r h36 mt25"><span class="l240 tsp">Spacing Options (em)</span><span class="sl98 clip">Character</span><div class="f f78 m7">0</div><span class="sl105 clip m9">Word</span><div class="f f79">0</div></div>
          <div class="r h36 mt4"><span class="l240"></span><span class="sl98 clip">Line</span><div class="f f78 m7">0</div><span class="sl105 clip m9">Paragraph</span><div class="f f79">0</div></div>
          <div class="r h32 mt22"><span class="l239">Alignment</span>
            <div class="segs">
              <span class="sb w42 on"><svg class="i ali bright"><use href="#al-l"/></svg></span><span class="sb w46"><svg class="i ali bright"><use href="#al-c"/></svg></span><span class="sb w46"><svg class="i ali bright"><use href="#al-r"/></svg></span><span class="sb w46"><svg class="i ali bright"><use href="#al-j"/></svg></span><span class="sb w46"><svg class="i ali bright"><use href="#al-f"/></svg></span><span class="sb w48"><svg class="i ali bright"><use href="#al-g"/></svg></span>
            </div>
          </div>
          <div class="r h32 mt14"><span class="l239"></span>
            <div class="segs">
              <span class="sb w42 on"><svg class="i vai bright"><use href="#va-t"/></svg></span><span class="sb w46"><svg class="i vai bright"><use href="#va-m"/></svg></span><span class="sb w46"><svg class="i vai bright"><use href="#va-b"/></svg></span><span class="sb w46"><span class="aj aj1">Aj</span></span><span class="sb w46"><span class="aj aj2">Aj</span></span><span class="sb w48"><span class="aj aj3">Aj</span></span>
            </div>
          </div>
          <div class="r h32 mt28"><span class="l242">Wrapping</span><div class="dd w372"><span>Enabled</span><i class="tri t14"></i></div></div>
        </div>
        <div class="scrollbar"><i class="tri up"></i><i class="sb-thumb"></i><i class="tri t14 sb-dn"></i></div>
      </div>
      <div class="layout-band"><b>Layout Properties</b><i class="lb-lines"></i><span class="lb-d"><svg class="i dots"><use href="#dots"/></svg></span></div>
    </section>
  </main>

  <footer class="status">
    <span class="st-i"><svg class="i s28"><use href="#bugoff"/></svg></span>
    <span class="st-i"><svg class="i s28"><use href="#dboff"/></svg></span>
    <span class="st-i"><svg class="i s28"><use href="#lightoff"/></svg></span>
    <span class="st-i last"><svg class="i s28"><use href="#okring"/></svg></span>
  </footer>
</div>
</body>
</html>
```

FILE: styles.css
```css
:root{
  --txt:#a45cd0; --bright:#be6bea; --dimtxt:#5f3a78;
  --top:#120b18; --strip:#1f1229; --bar:#2e1c3a; --panel:#2c1a36; --btn:#412852;
  --on:#392b78; --field:#1f1229; --line:#170d1e;
}
*{box-sizing:border-box}
html,body{margin:0;padding:0;background:var(--top)}
body{font:24px/1.2 Inter,"Liberation Sans",sans-serif;color:var(--txt);width:2880px;height:1800px;overflow:hidden}
b{font-weight:600}
.defs{position:absolute;width:0;height:0;overflow:hidden}
.i{display:block;flex:none;color:inherit}
.bright{color:var(--bright)}
.s20{width:20px;height:20px}.s22{width:22px;height:22px}.s24{width:24px;height:24px}.s24b{width:24px;height:24px}
.s26{width:26px;height:26px}.s26b{width:26px;height:24px}.s28{width:28px;height:28px}.s30{width:30px;height:30px}.s32{width:32px;height:32px}
.tri{display:block;flex:none;width:0;height:0;border-left:8px solid transparent;border-right:8px solid transparent;border-top:11px solid currentColor}
.t14{border-left-width:7px;border-right-width:7px;border-top-width:9px}
.t17{border-left-width:8.5px;border-right-width:8.5px;border-top-width:11px}
.t-h{border-left-width:9px;border-right-width:9px;border-top:16px solid #553168}
.t-p{border-left-width:9px;border-right-width:9px;border-top:15px solid #553168}
.rt-t{border-top:8px solid transparent;border-bottom:8px solid transparent;border-left:15px solid #553168;border-right:0}
.up{border-top:0;border-bottom:9px solid currentColor;border-left-width:7px;border-right-width:7px}
.end{margin-left:auto}

.app{width:2880px;height:1800px;display:flex;flex-direction:column}
.top{height:60px;flex:none;display:grid;grid-template-columns:1fr auto 1fr;align-items:start;padding-top:11px}
.top-l{display:flex;gap:8px;padding-left:14px}
.top-c{display:flex;gap:2px;margin-top:1px}
.top-r{display:flex;gap:8px;justify-content:flex-end;padding-right:18px}
.tbtn{height:38px;background:#2a1a36;border-radius:3px;display:flex;align-items:center}
.ab{width:116px;padding:0 7px 0 10px}
.ab-t{margin-left:17px;margin-right:auto}
.cloud{width:62px;justify-content:center}
.cl{width:28px;height:20px}
.hist{width:62px;justify-content:center}
.drop{width:158px;padding:0 7px}
.drop span{margin-right:auto}
.pbtn{width:62px;height:36px;background:#2a1a36;display:flex;align-items:center;justify-content:center}
.pbtn.on{background:#1e2575;color:var(--bright);border-radius:3px 0 0 3px}
.stepb{width:60px;border-radius:0 3px 3px 0}
.p{width:16px;height:20px}.st{width:20px;height:20px}

.main{flex:1;min-height:0;display:flex;gap:4px}
.col-left{width:1600px;display:flex;flex-direction:column;gap:5px}
.col-mid{width:583px;display:flex;flex-direction:column;gap:4px}
.scene{height:890px;display:flex;flex-direction:column}
.game{flex:1;min-height:0;display:flex;flex-direction:column}
.strip{height:38px;flex:none;background:var(--strip);border-radius:6px 6px 0 0;display:flex;align-items:center;border-bottom:1px solid #1a0f22}
.tab{height:38px;background:var(--bar);border-radius:6px 6px 0 0;display:flex;align-items:center;flex:none}
.tab span{padding-top:3px}
.w152{width:152px;padding-left:14px}.w146{width:146px;padding-left:12px}.w192{width:192px;padding-left:17px}.w162{width:162px;padding-left:16px}.w186{width:186px;padding-left:18px}
.hashi{width:22px;height:20px}.padi{width:28px;height:20px}.listi{width:22px;height:18px}.fd-tab{width:24px;height:20px}
.tabt-47{margin-left:10px}.tabt-47b{margin-left:6px}.tabt-h{margin-left:10px}.tabt-p{margin-left:8px}.tabt-i{margin-left:10px}
.dots{width:6px;height:20px}
.dots-r{margin-left:auto;margin-right:23px}
.strip-r{margin-left:auto;display:flex;align-items:center;gap:23px;padding-right:23px}
.strip-ri{gap:23px;padding-right:25px}
.lock{width:18px;height:20px}

.scene-tb{height:52px;flex:none;background:var(--bar);display:flex;align-items:center;gap:6px;padding:0 6px 0 12px}
.grip{flex:none;width:8px;height:32px;border-left:2px solid #452a55;border-right:2px solid #452a55;margin-right:5px}
.g2{margin-left:12px}
.g3{margin-right:5px}
.b{height:40px;background:var(--btn);border-radius:4px;display:flex;align-items:center;flex:none;padding:0 11px 0 8px}
.b.on{background:var(--on)}
.b.dim{background:#39224a;color:#5f3a78}
.center{width:150px}.local{width:133px}
.tight{margin-left:2px}
.split{width:74px;padding:0;background:none}
.split.on{background:var(--on)}
.sp1{width:44px;height:40px;display:flex;align-items:center;justify-content:center}
.sp2{width:28px;height:40px;margin-left:2px;display:flex;align-items:center;justify-content:center;border-left:0}
.split{background:linear-gradient(90deg,var(--on) 44px,var(--bar) 44px,var(--bar) 46px,var(--on) 46px)}
.split.dim{background:linear-gradient(90deg,#39224a 44px,var(--bar) 44px,var(--bar) 46px,#39224a 46px)}
.split.on .tri{color:#a45cd0}
.inc{width:72px}
.spacer{flex:1}
.orb{width:72px}
.sq{width:64px;padding:0;justify-content:center}
.twod{font-weight:600;letter-spacing:-1px}
.bulb{width:18px;height:26px}
.mute{width:24px;height:22px}
.fx{width:26px;height:26px}
.eye{width:30px;height:26px}
.camb{width:71px;padding:0 11px 0 10px}
.cam{width:26px;height:20px;color:#8d50b5}
.gizmob{margin-left:1px}

.scene-view{flex:1;min-height:0;position:relative;overflow:hidden;background-color:#484848;
  background-image:
    linear-gradient(90deg,#6e6e6e 1px,transparent 1px),
    linear-gradient(180deg,#6e6e6e 1px,transparent 1px),
    linear-gradient(90deg,#585858 1px,transparent 1px),
    linear-gradient(180deg,#585858 1px,transparent 1px);
  background-size:621px 100%,100% 621px,62.1px 100%,100% 62.1px;
  background-position:463px 0,0 5px,28px 0,0 5px;
}
.gizmos{position:absolute;left:0;top:0;display:block}
.gz-text{font:22px "Liberation Sans",sans-serif;fill:#dcdcdc}
.toolbox{position:absolute;left:4px;top:4px;width:76px;height:291px;background:#0e0e0e;border-radius:6px;padding:0 6px;display:flex;flex-direction:column;gap:2px}
.tb-grip{height:9px;flex:none;margin:12px 10px;border-top:2px solid #452a55;border-bottom:2px solid #452a55}
.tool{height:40px;width:64px;background:#3f2450;display:flex;align-items:center;justify-content:center;flex:none}
.tool:nth-child(2){border-radius:5px 5px 0 0}
.tool:last-child{border-radius:0 0 5px 5px}
.tool.on{background:#332670}

.gstrip{height:38px}
.gtab{height:38px;border-top:4px solid #2a2a86}
.game-tb{height:41px;flex:none;background:var(--strip);display:flex;gap:2px;padding:0 0 1px 2px}
.gs{background:var(--bar);display:flex;align-items:center;flex:none}
.gs>span{padding-top:2px}
.g1{width:179px;padding:0 10px 0 6px}
.g2w{width:169px;padding:0 9px 0 17px}
.g3w{width:318px;padding:0 9px 0 6px}
.g4w{width:336px;padding:0 0 0 12px}
.g5w{width:219px;padding:0 9px 0 6px}
.dimt{color:#5f3a78}
.ic{width:49px;justify-content:center}
.kbd{width:28px;height:20px}
.g6w{width:76px;padding-left:4px;justify-content:center}
.g7w{flex:1;padding:0 10px 0 7px}
.thumb{width:20px;height:20px;background:#7f4aa5;border-radius:50%;margin-left:12px;flex:none}
.track{width:135px;height:4px;background:#4b2c60;flex:none}
.onex{margin-left:12px}
.vd{width:2px;height:36px;background:#1f1229;margin-left:auto;margin-right:10px;flex:none}
.game-blue{height:360px;flex:none;background:#374f75;display:flex;align-items:center;padding:34px 0 0 703px}
.g-clock{font:36px "Liberation Sans",sans-serif;color:#fff}
.game-pink{flex:1;background:#c73df0}

.hier{height:746px;display:flex;flex-direction:column;flex:none}
.pn-tb{height:40px;flex:none;background:var(--bar);display:flex;align-items:center;padding-left:14px}
.plus{width:24px;height:24px}
.tp{margin-left:9px}
.sf{height:31px;background:var(--field);border:2px solid #150b1b;border-radius:8px;display:flex;align-items:center;flex:none;margin-left:26px;padding-right:0;overflow:hidden}
.sf-h{width:491px;padding-left:8px}
.sf-p{width:250px;padding-left:8px;margin-left:30px}
.keys{width:18px;height:14px}
.mag{width:14px;height:14px}
.ph{margin-left:10px;color:#5f3a78;font-size:22px}
.sf-b{margin-left:auto;width:35px;height:31px;background:var(--panel);display:flex;align-items:center;justify-content:center}
.tree{flex:1;background:linear-gradient(90deg,#28172f 64px,var(--panel) 64px)}
.root{height:32px;display:flex;align-items:center;background:#24152e;padding-left:69px;border-bottom:1px solid #2c1a36}
.unity{width:25px;height:28px;margin-left:9px}
.rt{margin-left:10px;padding-top:3px}
.dots-root{margin-left:auto;margin-right:22px}
.tr{height:32px;display:flex;align-items:center;white-space:nowrap}
.tr span{padding-top:3px}
.tr .cube{margin-right:8px}
.cube{width:26px;height:28px}
.l0{padding-left:96px}.l0 .tri{margin-right:8px}
.l1{padding-left:122px}
.l2{padding-left:150px}
.sel{background:linear-gradient(90deg,#38213f 64px,#3d2450 64px)}

.proj{flex:1;min-height:0;display:flex;flex-direction:column}
.ptb{padding-left:14px;border-bottom:2px solid var(--line);height:42px}
.pf{height:38px;background:var(--bar);display:flex;align-items:center;justify-content:center;flex:none;border-left:2px solid #1f1229;margin-left:0}
.w50{width:52px;padding-right:4px}
.w79{width:81px;padding-left:8px;justify-content:flex-start;gap:4px}
.sf-p+.pf{margin-left:7px}
.shapes{width:24px;height:28px}
.ptree{flex:1;background:var(--panel);padding-top:5px}
.pfoot{height:39px;flex:none;background:var(--bar)}
.pr{height:32px;display:flex;align-items:center;white-space:nowrap}
.pr>span,.pr>b{padding-top:3px}
.folder{width:24px;height:20px}
.fo{width:27px;height:20px}
.script{width:24px;height:28px}
.a0{padding-left:8px}
.a0 .tri{width:0;margin-right:10px}
.a0 .rt-t{margin-left:2px;margin-right:13px}
.a0 .i{margin-right:8px}
.a0 .folder{margin-right:11px}
.a1{padding-left:38px}
.a1 .tri{margin-right:8px}
.a1 .rt-t{margin-right:11px;margin-left:0}
.a1 .i{margin-right:8px}
.a1 .fo{margin-right:6px}
.a2{padding-left:92px}
.a2 .i{margin-right:8px}

.insp{flex:1;min-width:0;display:flex;flex-direction:column}
.ins-body{flex:1;min-height:0;display:flex;background:var(--panel)}
.ins-content{width:663px;flex:none;overflow:hidden;height:1614px}
.scrollbar{width:26px;flex:none;display:flex;flex-direction:column;align-items:center;padding-top:12px;border-left:1px solid #28172f;height:1614px}
.sb-thumb{width:20px;height:936px;background:#4b2c5e;border-radius:10px;margin-top:13px;flex:none}
.sb-dn{margin-top:auto;margin-bottom:12px}

.ohead{height:118px;background:var(--bar);padding-top:18px}
.oh1{height:36px;display:flex;align-items:center;padding-left:15px}
.oh1>.static,.oh2>span{padding-top:2px}
.cubebig{width:52px;height:48px;align-self:flex-start;margin-top:4px}
.cb{width:28px;height:28px;background:var(--field);border:1px solid #170d1e;border-top:2px solid #170d1e;border-radius:4px;flex:none;display:flex;align-items:center;justify-content:center}
.ck{width:17px;height:14px}
.m27{margin-left:27px}
.m7{margin-left:7px}
.f{height:36px;background:var(--field);border:2px solid #170d1e;border-radius:6px;display:flex;align-items:center;padding:2px 0 0 4px;flex:none;white-space:nowrap}
.name{width:367px;margin-left:12px;padding-left:4px}
.static{width:90px;margin-left:9px}
.oh2{height:33px;margin-top:14px;display:flex;align-items:center;padding-left:81px}
.w52{width:52px}.w73{width:73px}
.dd{height:33px;background:var(--btn);border-radius:5px;display:flex;align-items:center;justify-content:space-between;padding:2px 10px 0 6px;border-bottom:2px solid #1f1229;flex:none}
.w220{width:220px}
.w200{width:200px;margin-left:0}
.oh2 .w52+.dd{margin-right:27px}
.w372{width:372px;padding-right:16px}
.sm{font-size:22px}
.sm,.h31 .dd{height:31px}
.h32 .dd{height:32px}

.ch{height:42px;background:#301d3d;border-top:2px solid var(--line);display:flex;align-items:center;padding-left:12px;flex:none}
.ch>b{padding-top:2px}
.ch-ic{width:32px;margin-left:10px;display:flex;justify-content:center;align-items:center;flex:none}
.ch-cb{width:28px;margin-left:8px;margin-right:13px;flex:none}
.ch-r{margin-left:auto;display:flex;align-items:center;gap:20px;padding-right:23px}
.ch-r .dots{margin-left:7px}
.rt-i{width:26px;height:24px}
.ring{width:32px;height:28px}
.tbox{width:32px;height:31px;border:2px solid #0f50e0;color:#0f50e0;font:700 30px/27px "Liberation Serif",serif;text-align:center}
.ch-mt18{margin-top:18px}
.ch-mt23{margin-top:23px}

.rt-top{display:flex;padding-top:20px}
.anchor{width:275px;flex:none;display:grid;grid-template-columns:35px 69px;grid-template-rows:38px 70px;margin-left:0;padding-left:20px;align-content:start}
.a-c{grid-column:2;grid-row:1;font-size:21px;align-self:start;line-height:26px;white-space:nowrap;padding-left:1px}
.a-m{grid-column:1;grid-row:2;writing-mode:vertical-rl;transform:rotate(180deg);font-size:21px;line-height:16px;width:16px;text-align:center}
.a-box{grid-column:2;grid-row:2;position:relative;border:2px solid #583472}
.a-inner{position:absolute;left:15px;top:16px;width:35px;height:35px;border:2px solid #583472}
.a-h{position:absolute;left:0;right:0;top:32px;height:2px;background:#7e2a52}
.a-v{position:absolute;top:0;bottom:0;left:31.5px;width:2px;background:#7e2a52}
.a-o{position:absolute;left:30px;top:30px;width:6px;height:6px;background:#b3531f}
.rt-grid{display:grid;grid-template-columns:122px 123px 124px;column-gap:6px;grid-template-rows:30px 42px 30px 36px;align-items:start}
.rt-grid span{line-height:26px}
.rt-btns{display:flex;gap:2px;margin-left:22px;margin-top:-2px}
.rb{height:36px;background:#40264f;display:flex;align-items:center;justify-content:center;color:#5f3a78;flex:none}
.rb1{width:46px;border-radius:4px 0 0 4px}
.rb2{width:52px;border-radius:0 4px 4px 0;line-height:36px}

.r{display:flex;align-items:center;padding-left:38px;flex:none;white-space:nowrap}
.r>span{padding-top:2px}
.r>span:first-child{margin-right:1px}
.r>.cb{padding-top:0}
.anchors{height:26px;margin-top:9px;padding-left:16px}
.anchors .tri{margin-right:7px}
.pivot{height:36px;margin-top:9px}
.rot{height:36px;margin-top:20px}
.scale{height:36px;margin-top:4px}
.l238{width:238px;flex:none}.l241{width:241px;flex:none}.l242{width:242px;flex:none}.l244{width:244px;flex:none}.l239{width:239px;flex:none}.l240{width:240px;flex:none}.l212{width:212px;flex:none}
.lnk{display:flex;align-items:center;justify-content:space-between;padding-right:21px}
.link{width:24px;height:20px}
.ax{width:21px;flex:none}.ay{margin-left:8px}
.ax2{width:27px;flex:none}
.g11{margin-left:11px}
.w99{width:99px}.w100{width:100px}.w90{width:90px}.w89{width:89px}.w95{width:95px}
.clip{overflow:hidden;white-space:nowrap}
.tsp{letter-spacing:-.3px}
.cull{height:28px;margin-top:14px}
.cull .l241{width:238px;margin-right:4px}

.sec{margin-left:19px;width:634px;background:#40264f;border:2px solid var(--line);border-width:3px 2px;display:flex;align-items:center;padding-left:16px}
.sec-ti{height:44px;margin-top:25px;padding-top:7px}
.rtl{margin-left:auto;margin-right:19px;margin-top:-2px}
.sec-ti .cb{margin-right:20px;margin-top:-1px}
.sec-ms{height:42px;margin-top:4px;padding-top:10px}
.ta{margin:40px 0 0 37px;width:618px;height:155px;background:var(--field);border:2px solid #170d1e;border-radius:6px;padding:3px 3px}
.h33{height:33px}.h36{height:36px}.h31{height:31px}.h32{height:32px}.h35{height:35px}.h27{height:27px}
.mt4{margin-top:4px}.mt5{margin-top:5px}.mt6{margin-top:6px}.mt7{margin-top:7px}.mt8{margin-top:8px}.mt9{margin-top:9px}.mt11{margin-top:11px}.mt13{margin-top:13px}.mt14{margin-top:14px}.mt22{margin-top:22px}.mt24{margin-top:24px}.mt25{margin-top:25px}.mt28{margin-top:28px}
.fa{width:375px;padding:0 0 0 4px;overflow:hidden}
.fbox{width:24px;height:24px;border:2px solid #0f50e0;color:#0f50e0;font:700 24px/20px "Liberation Serif",serif;text-align:center;flex:none}
.fa-t{width:303px;overflow:hidden;margin-left:2px;flex:none;padding-top:2px}
.fa-b{flex:1;height:32px;background:var(--panel);display:flex;align-items:center;justify-content:center}
.segs{display:flex;gap:2px;flex:none}
.sb{height:32px;background:var(--btn);display:flex;align-items:center;justify-content:center;flex:none;border-bottom:2px solid #1f1229}
.sb:first-child{border-radius:5px 0 0 5px}
.sb:last-child{border-radius:0 5px 5px 0}
.sb.on{background:var(--on)}
.w48{width:48px}.w54{width:54px}.w42{width:42px}.w46{width:46px}
.segs .w52{width:52px}
.m5{margin-left:5px}
.ind{padding-left:66px}
.color{width:375px;height:36px;background:var(--field);border:2px solid #170d1e;border-radius:6px;display:flex;align-items:center;flex:none;overflow:hidden}
.white{width:336px;height:32px;background:#fff;flex:none}
.drop-b{flex:1;display:flex;justify-content:center}
.sl98{width:98px;flex:none}
.sl105{width:105px;flex:none}
.f78{width:78px}.f79{width:79px}
.m9{margin-left:9px}
.ali{width:24px;height:22px}
.vai{width:24px;height:30px}
.aj{width:28px;height:30px;font-size:20px;line-height:30px;text-align:center;letter-spacing:-1px}
.aj1{background:linear-gradient(currentColor,currentColor) 0 21px/100% 2px no-repeat}
.aj2{background:linear-gradient(currentColor,currentColor) 0 3px/100% 2px no-repeat,linear-gradient(currentColor,currentColor) 0 27px/100% 2px no-repeat}
.aj3{background:linear-gradient(currentColor,currentColor) 0 3px/100% 2px no-repeat,linear-gradient(currentColor,currentColor) 0 8px/100% 2px no-repeat,linear-gradient(currentColor,currentColor) 0 23px/100% 2px no-repeat}

.layout-band{height:42px;flex:none;background:var(--bar);border-top:2px solid var(--line);display:flex;align-items:center;padding-left:14px}
.lb-lines{width:418px;height:8px;margin-left:12px;border-top:2px solid #4b2c60;border-bottom:2px solid #4b2c60;flex:none}
.lb-d{width:34px;height:40px;margin-left:5px;border-left:2px solid #1f1229;display:flex;align-items:center;justify-content:center;flex:none}

.status{height:45px;flex:none;display:flex;justify-content:flex-end;align-items:stretch;padding:5px 0 0 0;background:var(--top)}
.st-i{width:53px;display:flex;align-items:center;justify-content:center;border-left:2px solid #1f1229;flex:none}
.last{width:53px}
```
